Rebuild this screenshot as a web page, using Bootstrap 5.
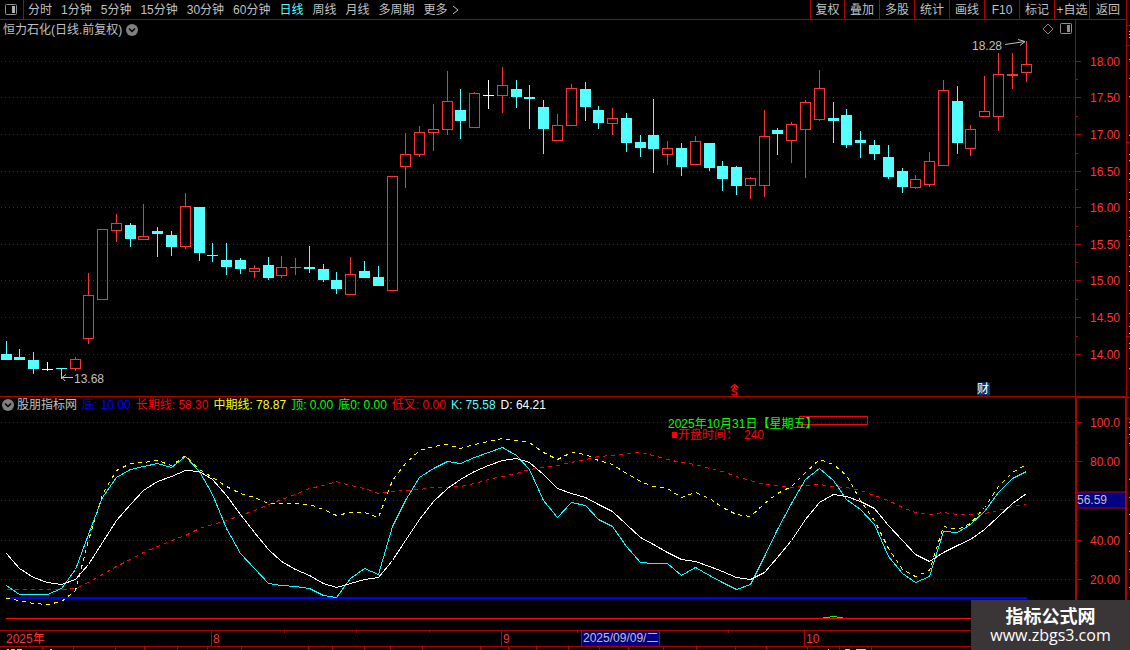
<!DOCTYPE html>
<html lang="zh-CN">
<head>
<meta charset="utf-8">
<meta name="viewport" content="width=device-width, initial-scale=1">
<title>恒力石化 日线</title>
<link href="https://cdn.jsdelivr.net/npm/bootstrap@5.3.0/dist/css/bootstrap.min.css" rel="stylesheet">
<style>
:root{--line:#b00000;--txt:#c0c0c0;--up:#ff3232;--down:#54ffff}
body{background:#000;color:var(--txt);font:12px/16px "Liberation Sans","Noto Sans CJK SC",sans-serif;overflow:hidden;text-spacing-trim:space-all}
.toolbar{height:20px;border-bottom:1px solid var(--line)}
.toolbar .btn{font-size:12px;line-height:16px;color:var(--txt);border:0;border-radius:0;padding:0;white-space:nowrap}
.toolbar .btn.active{color:var(--down);background:none}
.toolbar .toggle-cell{width:24px;border-right:1px solid var(--line)}
.periods{gap:9px;padding-left:4px}
.toolbar .actions .btn{width:35px;border-left:1px solid var(--line)}
.toolbar .actions .btn:first-child{width:34px}
.toolbar .actions .btn:last-child{width:37px}
.price-panel{flex:376 1 0;min-height:0;border-bottom:1px solid var(--line)}
.osc-panel{flex:233 1 0;min-height:0;border-bottom:1px solid var(--line)}
.plot,.main-col{min-width:0}
.plot>svg,.scale>svg{width:100%;height:100%;display:block;position:absolute;inset:0}
.scale{width:51px;border-left:1px solid var(--line);color:var(--up)}
.osc-panel .scale{border:2px solid var(--line);border-bottom:0;border-top-width:1px;width:52px;margin-right:-1px;z-index:1}
.scale-label{position:absolute;right:6px;transform:translateY(-50%)}
.osc-panel .scale-label{right:5px}
.tag{position:absolute;transform:translateY(-50%);white-space:nowrap}
.session-line{line-height:10px}
.panel-head{position:absolute;left:2px;top:0;z-index:1}
.values{gap:5px}
.indicator-name{gap:3px}
.stock-head{top:2px;left:3px}
.value-tag{position:absolute;left:0;right:0;transform:translateY(-50%);background:#000080;color:var(--txt);border:solid var(--line);border-width:1px 0;line-height:15px}
.corner-tools{position:absolute;right:2px;top:3px;gap:6px}
.report-tag{background:#003a70;color:#fff;width:13px;height:13px;line-height:13px}
.date-axis{height:16px;border-bottom:1px solid var(--line);color:var(--up)}
.date-mark{position:absolute;top:0;bottom:0;line-height:16px;border-left:1px solid var(--line);padding-left:1px}
.date-mark.first{border:0;padding:0}
.date-mark.cursor{background:#000080;color:var(--txt);border-right:1px solid var(--line);padding-right:1px;line-height:14px}
.minor-tick{position:absolute;top:0;width:1px;height:2px;background:var(--line)}
.foot{height:3px}
.edge{width:4px;border-left:1px solid var(--line)}
.site-mark{position:absolute;right:0;bottom:0;width:159px;height:50px;background:#3a3536;color:#fff;z-index:3}
.site-name{font:bold 18px/20px "Noto Sans CJK SC",sans-serif}
.site-url{font:16px/20px "Open Sans",sans-serif;color:#fff}
.c-blue{color:#00f}.c-red{color:#f00}.c-yellow{color:#ff0}.c-green{color:#0f0}.c-cyan{color:#54ffff}.c-white{color:#fff}
</style>
</head>
<body>
<div class="d-flex vh-100 position-relative">
  <div class="main-col d-flex flex-column flex-grow-1">
    <header class="toolbar d-flex flex-shrink-0">
      <button class="btn toggle-cell d-flex align-items-center justify-content-center" aria-label="侧栏">
        <svg width="13" height="12"><rect x=".5" y=".5" width="11" height="10" rx="1" fill="none" stroke="#909090"/><rect x="7" y="2" width="3" height="7" fill="#b0b0b0"/></svg>
      </button>
      <nav class="periods d-flex align-items-center">
        <button class="btn">分时</button><button class="btn">1分钟</button><button class="btn">5分钟</button><button class="btn">15分钟</button><button class="btn">30分钟</button><button class="btn">60分钟</button><button class="btn active">日线</button><button class="btn">周线</button><button class="btn">月线</button><button class="btn">多周期</button>
        <button class="btn d-flex align-items-center gap-1">更多<svg width="7" height="10"><path d="M1 1l5 4-5 4" fill="none" stroke="#c0c0c0"/></svg></button>
      </nav>
      <div class="actions d-flex ms-auto">
        <button class="btn">复权</button><button class="btn">叠加</button><button class="btn">多股</button><button class="btn">统计</button><button class="btn">画线</button><button class="btn">F10</button><button class="btn">标记</button><button class="btn">+自选</button><button class="btn">返回</button>
      </div>
    </header>

    <section class="price-panel d-flex">
      <div class="plot position-relative flex-grow-1">
        <svg id="price" viewBox="0 20 1075 376" preserveAspectRatio="none" shape-rendering="crispEdges"></svg>
        <div class="panel-head stock-head d-flex align-items-center gap-1">
          <span>恒力石化(日线.前复权)</span>
          <svg width="12" height="12"><circle cx="6" cy="6" r="6" fill="#808080"/><path d="M3 4.500l3 3 3-3" fill="none" stroke="#000" stroke-width="1.500"/></svg>
        </div>
        <div class="corner-tools d-flex align-items-center">
          <svg width="12" height="12"><path d="M6 1l5 5-5 5-5-5z" fill="none" stroke="#808080"/></svg>
          <svg width="13" height="12"><rect x=".5" y=".5" width="11" height="10" rx="1" fill="none" stroke="#909090"/><rect x="7" y="2" width="3" height="7" fill="#909090"/></svg>
        </div>
        <span class="tag" data-x="972" data-y="46">18.28</span>
        <span class="tag" data-x="74" data-y="379">13.68</span>
        <span class="tag report-tag" data-x="977" data-y="389">财</span>
      </div>
      <div class="scale position-relative flex-shrink-0" id="priceScale"></div>
    </section>

    <section class="osc-panel d-flex">
      <div class="plot position-relative flex-grow-1">
        <svg id="osc" viewBox="0 397 1075 233" preserveAspectRatio="none" shape-rendering="crispEdges"></svg>
        <div class="panel-head values d-flex align-items-center text-nowrap">
          <span class="indicator-name d-flex align-items-center"><svg width="12" height="12"><circle cx="6" cy="6" r="6" fill="#808080"/><path d="M3 4.500l3 3 3-3" fill="none" stroke="#000" stroke-width="1.500"/></svg>股朋指标网</span>
          <span class="c-blue">底: 10.00</span><span class="c-red">长期线: 58.30</span><span class="c-yellow">中期线: 78.87</span><span class="c-green">顶: 0.00</span><span class="c-green">底0: 0.00</span><span class="c-red">低叉: 0.00</span><span class="c-cyan">K: 75.58</span><span class="c-white">D: 64.21</span>
        </div>
        <span class="tag session-line c-green" data-x="668" data-y="424">2025年10月31日【星期五】</span>
        <span class="tag session-line c-red" data-x="678" data-y="435">开盘时间：</span>
        <span class="tag session-line c-red" data-x="744" data-y="435">240</span>
      </div>
      <div class="scale position-relative flex-shrink-0" id="oscScale"></div>
    </section>

    <div class="date-axis position-relative flex-shrink-0" id="dates"></div>
    <div class="foot flex-shrink-0"><svg id="foot" width="100%" height="3" viewBox="0 0 1126 3" preserveAspectRatio="none" class="d-block" shape-rendering="crispEdges"></svg></div>
  </div>
  <div class="edge flex-shrink-0"><svg id="edge" width="3" height="100%" viewBox="0 0 3 650" preserveAspectRatio="none" class="d-block" shape-rendering="crispEdges"></svg></div>
  <div class="site-mark d-flex flex-column align-items-center justify-content-center">
    <div class="site-name">指标公式网</div>
    <a class="site-url text-decoration-none" href="#">www.zbgs3.com</a>
  </div>
</div>
<script>
// centre x, kind (u up, d down, w flat, f filled up), high, body top, body bottom, low
const candles = `6d341,354,360,360 19d349,357,360,360 33d352,360,369,374 47w362,369,370,371 61d368,368,369,379 75u357,359,369,371 88u273,295,339,344 102u229,229,300,300 116u214,223,231,242 130d223,225,239,247 143u204,236,240,240 157d227,231,234,257 171d231,235,247,256 185u193,206,247,249 199d207,207,253,261 212d243,255,256,262 226d243,260,267,275 240d258,260,269,274 254u265,268,272,278 268d257,265,278,280 281u256,267,276,278 295f258,267,268,275 309d246,267,269,273 323d264,269,280,282 336d272,280,289,294 350u257,274,295,295 364d261,271,278,278 378d266,277,286,286 392u176,176,291,291 405u133,154,167,188 419u126,132,155,157 433u104,129,133,151 447u71,101,130,135 460d89,110,121,139 474u92,93,128,128 488w80,95,96,109 502u67,85,96,113 516d80,89,97,108 529d85,97,99,129 543d100,107,129,154 557u114,125,141,141 571u84,88,126,126 585d82,89,107,121 598d106,110,123,129 612u108,118,124,135 626d113,118,143,152 640d135,142,148,157 653d99,135,149,173 667u141,148,155,165 681d143,148,167,176 695u136,141,165,165 709d143,143,168,171 722d161,166,179,191 736d166,167,186,195 750u177,178,186,199 764u110,136,186,197 777d128,130,134,155 791u122,124,141,163 805u100,102,130,178 819u70,88,120,121 833d102,118,121,143 846d109,115,145,148 860d131,140,143,158 874d140,145,154,160 888d145,157,177,179 902d168,171,187,193 915u175,179,188,189 929u152,161,185,187 943u80,90,166,166 957d86,101,143,154 970u125,129,149,156 984u76,111,117,117 998u53,74,117,131 1012f53,74,76,89 1026u41,64,73,82`
  .split(' ').map(s => { const m = s.match(/^(\d+)([a-z])(.+)$/); return [+m[1], m[2], ...m[3].split(',').map(Number)]; });

const rect = (x, y, w, h, c) => `<rect x="${x}" y="${y}" width="${w}" height="${h}" fill="${c}"/>`;
const grid = y => `<path d="M1 ${y + .5}H1075" stroke="#a00000" stroke-dasharray="1 3"/>`;
const priceLevels = [61, 97, 134, 171, 207, 244, 280, 317, 354];
const oscLevels = [422, 461, 500, 540, 579];

let s = priceLevels.map(grid).join('');
for (const [x, k, hi, top, bot, lo] of candles) {
  const c = {u: '#ff3232', f: '#ff3232', d: '#54ffff', w: '#fff'}[k];
  if (k === 'u') {
    s += rect(x, hi, 1, top - hi, c) + rect(x, bot, 1, lo - bot, c);
    s += `<rect x="${x - 4.5}" y="${top + .5}" width="10" height="${bot - top - 1}" fill="none" stroke="${c}"/>`;
  } else s += rect(x, hi, 1, lo - hi, c) + rect(x - 5, top, 11, bot - top, c);
}
// high and low pointers
s += '<g fill="none" stroke="#c0c0c0" shape-rendering="auto"><path d="M1005 44.500L1025 41.500M1018 39.500L1025 41.500L1020 45.500"/><path d="M73 377.500H62M66 374.500L62 377.500L65 381"/></g>';
// dividend marker
s += '<g fill="none" stroke="#f00" shape-rendering="auto"><path d="M730.500 388L734.500 384.500L738.500 388" stroke-width="1.500"/><path d="M734.500 384V389"/><path d="M737.500 390Q734.500 388 732.500 389.500Q731.500 391 734.500 391.500Q738 392.500 736.500 394.500Q734 396 731.500 394" stroke-width="1.500"/></g>';
price.innerHTML = s;

const series = {
  long: [589,589,589,589,589,588,582,574,566,559,552,546,540,535,528,524,520,515,510,504,499,494,488,485,481,485,488,493,491,490,489,487,487,486,483,479,476,473,469,467,465,462,459,456,455,453,452,455,459,462,464,468,471,476,480,484,485,487,485,484,486,487,490,495,500,507,512,514,512,514,514,513,510,506,504],
  mid: [598,600,603,604,601,590,540,494,470,463,462,460,465,455,469,477,486,493,497,503,503,503,504,509,515,512,512,517,480,463,450,446,444,448,444,441,438,440,442,452,459,452,454,460,464,473,481,486,488,497,492,498,507,514,516,503,493,486,472,459,464,475,500,520,548,569,576,570,526,529,523,507,486,472,464],
  k: [585,594,594,594,588,569,534,497,477,469,466,463,467,456,471,494,528,553,568,583,585,586,588,595,597,578,568,574,526,500,477,468,461,463,457,452,447,455,469,500,517,502,505,519,526,546,562,563,563,575,567,575,582,589,584,556,529,503,479,468,480,499,509,524,556,573,582,576,531,532,524,511,492,478,471],
  d: [553,568,577,582,584,579,564,542,520,504,490,481,476,470,471,479,495,514,532,549,561,569,575,583,587,583,579,577,560,540,519,501,488,479,471,465,460,458,462,474,488,493,497,504,511,524,537,544,552,559,561,566,571,577,579,572,557,540,519,502,494,496,501,508,525,540,554,561,552,545,539,529,516,503,493]
};
const curve = (name, color, dash) =>
  `<polyline fill="none" stroke="${color}" ${dash ? `stroke-dasharray="${dash}"` : ''} points="${series[name].map((y, i) => candles[i][0] + .5 + ',' + (y + .5)).join(' ')}"/>`;
osc.innerHTML = oscLevels.map(grid).join('') + rect(6, 597, 1021, 2, '#00f') + rect(6, 618, 1069, 1, '#f00')
  + curve('long', '#f00', '4 4') + curve('mid', '#ff0', '4 4') + curve('k', '#0ff') + curve('d', '#fff')
  + rect(823, 617, 7, 1, '#0f0') + rect(830, 616, 7, 1, '#0f0') + rect(837, 617, 6, 1, '#0f0')
  + rect(672, 432, 5, 6, '#f00')
  + '<rect x="799.500" y="416.500" width="68" height="8" fill="none" stroke="#f00"/>';

// price and oscillator scales: labels, major and minor ticks
function scale(el, top, h, levels, labels, minor) {
  let t = '', html = '';
  levels.forEach((y, i) => {
    t += rect(0, y, 5, 1, '#b00000');
    if (i < levels.length - 1) t += rect(0, Math.round((y + levels[i + 1]) / 2), minor, 1, '#b00000');
    if (labels[i]) html += `<span class="scale-label" style="top:${(y + 1 - top) / h * 100}%">${labels[i]}</span>`;
  });
  el.innerHTML = `<svg viewBox="0 ${top} 50 ${h}" preserveAspectRatio="none" shape-rendering="crispEdges">${t}</svg>` + html;
}
scale(priceScale, 20, 376, priceLevels, ['18.00','17.50','17.00','16.50','16.00','15.50','15.00','14.50','14.00'], 2);
scale(oscScale, 398, 232, oscLevels, ['100.0','80.00','','40.00','20.00'], 1);
oscScale.innerHTML += `<span class="value-tag" style="top:${(499.5 - 398) / 232 * 100}%">56.59</span>`;

document.querySelectorAll('.tag').forEach(e => {
  const [, top, w, h] = e.parentNode.querySelector('svg').getAttribute('viewBox').split(' ').map(Number);
  e.style.left = e.dataset.x / w * 100 + '%';
  e.style.top = (e.dataset.y - top) / h * 100 + '%';
});

const pct = x => `left:${x / 1126 * 100}%`;
dates.innerHTML = [[6,'2025年','first'],[211,'8',''],[501,'9',''],[581,'2025/09/09/二','cursor'],[804,'10','']]
  .map(([x, t, c]) => `<span class="date-mark ${c}" style="${pct(x)}">${t}</span>`).join('')
  + [284,356,429,577,728].map(x => `<i class="minor-tick" style="${pct(x)}"></i>`).join('');
foot.innerHTML = [42,73,115,144,177,207,241,308,332,364,390,422,480,508,536,568,599,628,663,696,735,766,807,839,871].map(x => rect(x, 0, 1, 3, '#b00000')).join('')
  + [[7,2],[11,4],[17,5],[50,2],[828,1],[856,4]].map(([x, w]) => rect(x, 2, w, 1, '#c0c0c0')).join('') + rect(845, 2, 5, 1, '#54ffff') + rect(857, 2, 9, 1, '#54ffff');
edge.innerHTML = [25,45,142,239,336,397,418,437].map(y => rect(0, y, 3, 1, '#b00000')).join('')
  + [31,34,37,59,78,96,135,154,160,173,179,192,199,211,217,230,236,245,255,266,271,285,290,313,326,333,343,348,368,422,427,434,443,479,497,514,533,551,569,587].map(y => rect(2, y, 1, 1, '#c0c0c0')).join('');
</script>
<script src="https://cdn.jsdelivr.net/npm/bootstrap@5.3.0/dist/js/bootstrap.bundle.min.js"></script>
</body>
</html>
